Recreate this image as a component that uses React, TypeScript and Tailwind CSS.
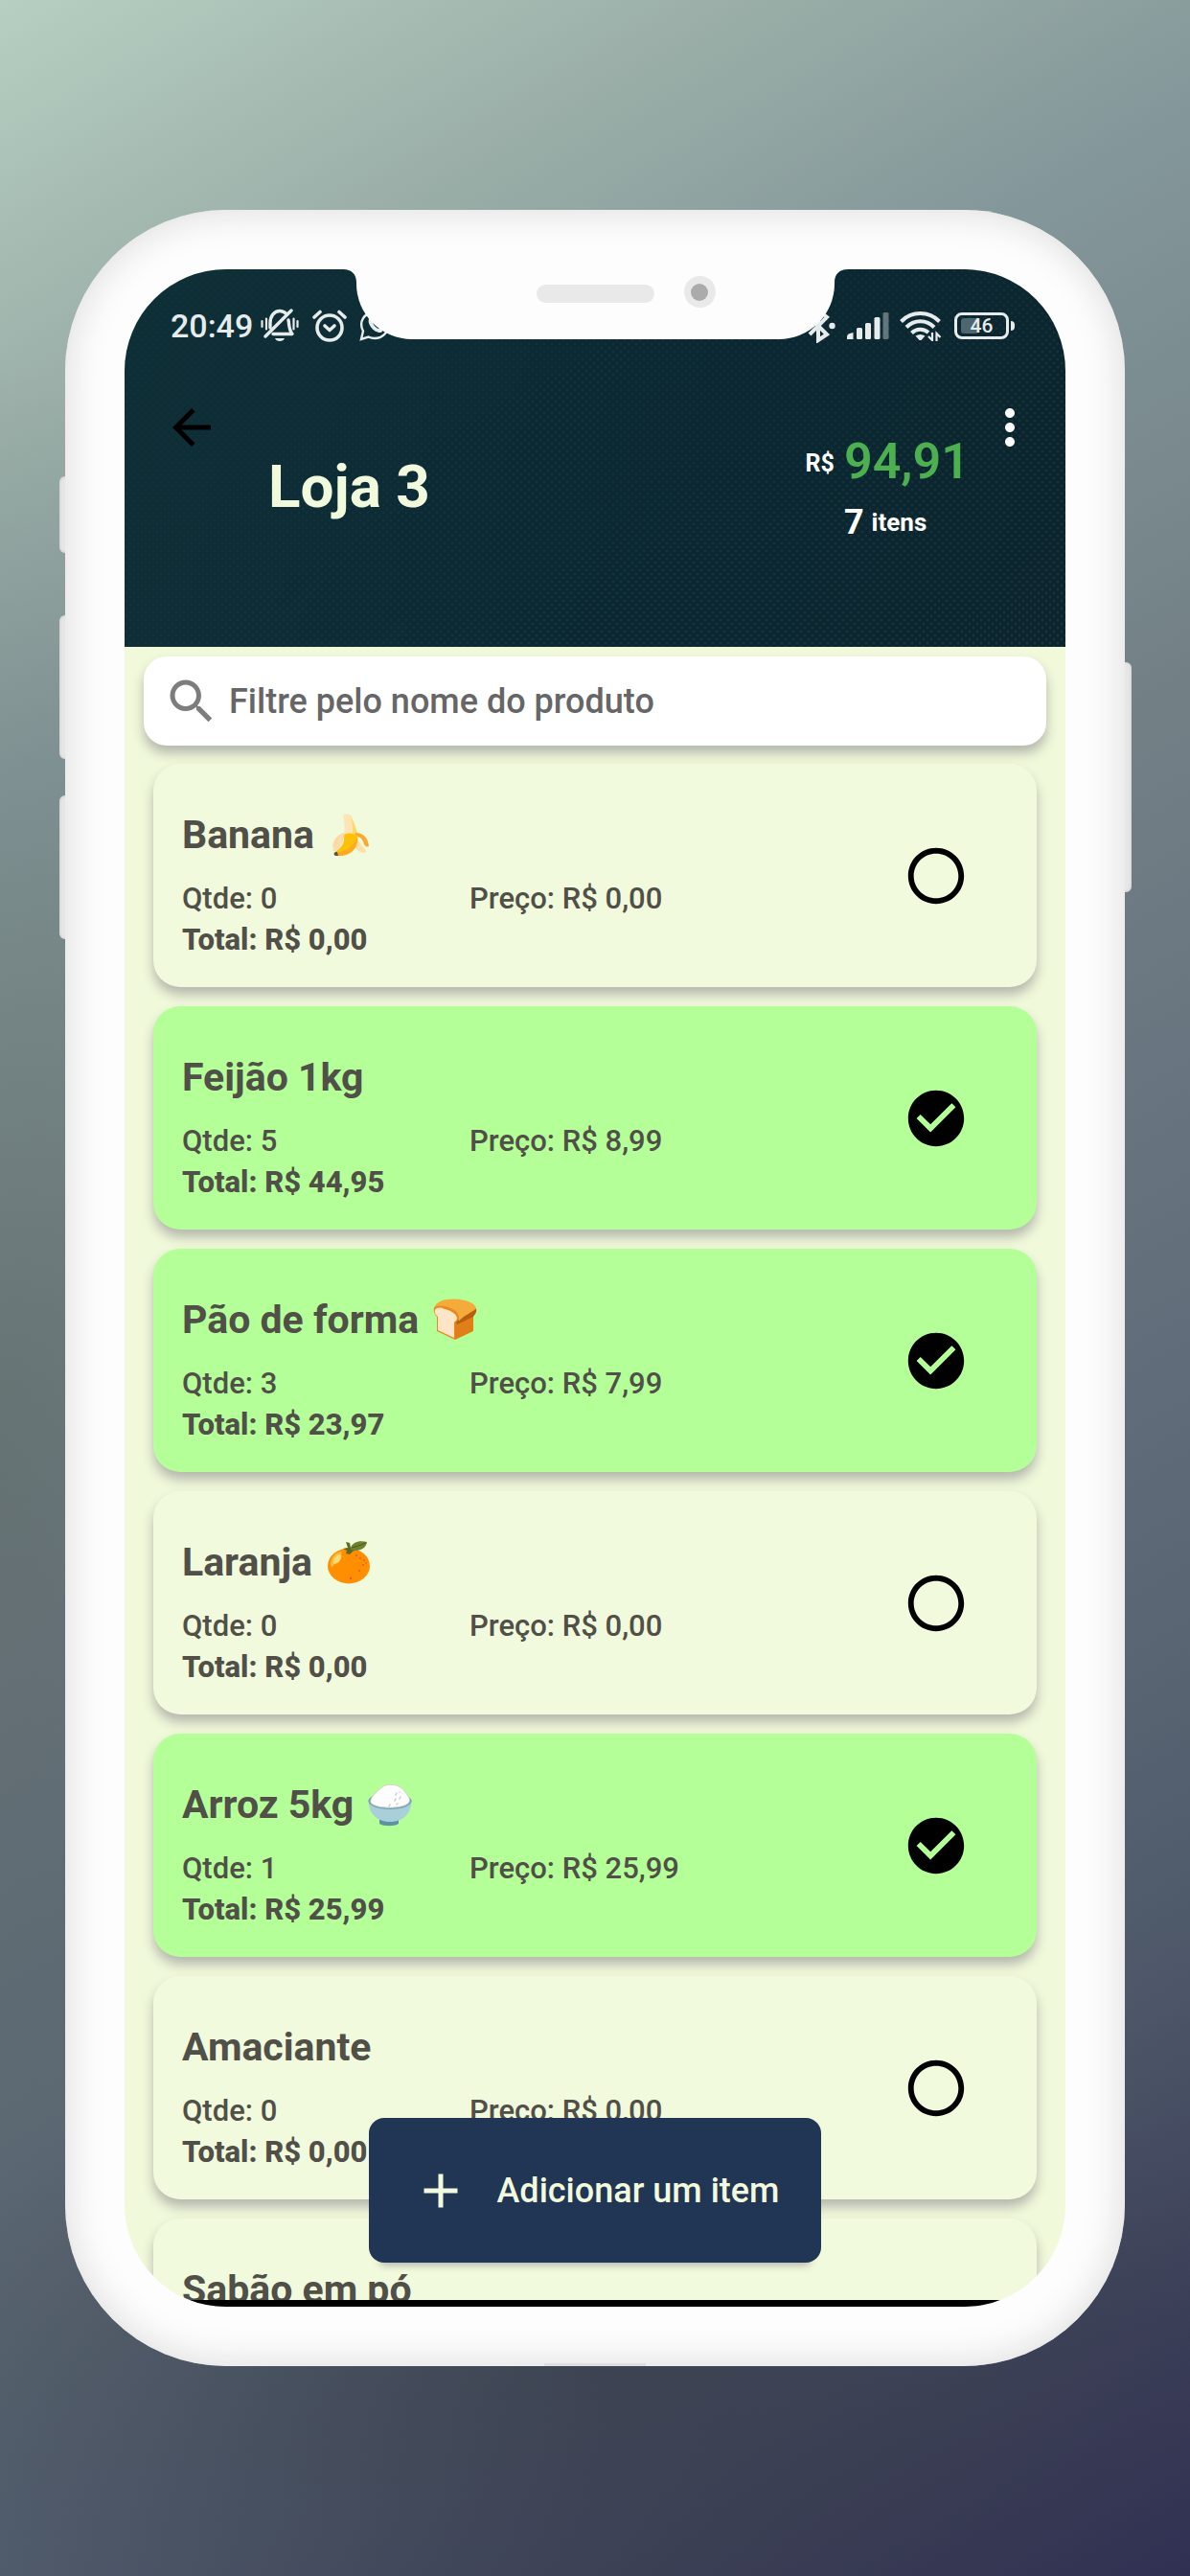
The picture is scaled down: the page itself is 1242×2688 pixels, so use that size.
import { useState } from "react";
import type { ReactNode } from "react";

type Product = {
  name: string;
  qty: string;
  price: string;
  total: string;
  done: boolean;
  emoji?: ReactNode;
};

function Banana() {
  return (
    <svg viewBox="0 0 48 48" className="size-12" role="img" aria-label="banana">
      <path d="M24 21C14 21 6 26 5 37c3 3 7-1 9-6 3-5 9-8 14-7z" fill="#fbd9a5" />
      <path d="M16 4c2-2 7-2 9 1 2 6 5 13 6 19l-6 6-8-5c1-7 1-15-1-21z" fill="#fde4b5" />
      <path d="M24 4c3 7 7 14 7 22l-6 3c2-9 1-17-1-25z" fill="#fdd968" />
      <path d="M29 22c7 0 13 4 14 14-2 1-4 0-5-2-1-5-4-8-9-9z" fill="#fba82c" />
      <path d="M28 25c4 2 5 9 12 15l-1 3c-8 0-13-7-12-16z" fill="#fde0a5" />
      <path d="M17 24c4-2 10-2 14 1 2 12-6 22-21 21-3-1-3-3-1-5 6-4 9-9 8-17z" fill="#ffc107" />
      <path d="M31 27c0 11-7 19-21 19-2-1-2-2-1-3 12-2 19-9 22-16z" fill="#ffa726" />
      <path d="M18 23c-2 2-1 7-4 12-3 5-7 8-9 5 3-2 5-6 6-10 1-3 3-6 7-7z" fill="#fcdda9" />
      <path d="M8 42c-2 1-2 3 0 4l3 0-1-4z" fill="#5d5140" />
    </svg>
  );
}

function Bread() {
  return (
    <svg viewBox="0 0 48 48" className="size-12" role="img" aria-label="pão">
      <path d="M24 45V24l21-10-2 6v16z" fill="#e07f18" />
      <path d="M24 23l22-11c1 5-2 7-3 9l-17 8z" fill="#b85c10" />
      <path d="M2 12C4 5 13 2 24 2.500s21 4 22 10c-6 5-13 7-18 13-1-6-7-11-16-13-5-1-9-1-10-.5z" fill="#f5ab3a" />
      <path d="M2 12c1-3 6-3 11-2 9 2 15 6 15 12 0 3-2 4-4 5v18L5 36V21c-2-2-4-5-3-9z" fill="#e88a20" />
      <path d="M3 14c2-3 6-3 10-1 8 2 13 6 13 10 0 2-3 3-3 4v16L6 35V21c-2-2-4-4-3-7z" fill="#ffe5c8" />
    </svg>
  );
}

function Orange() {
  return (
    <svg viewBox="0 0 48 48" className="size-12" role="img" aria-label="laranja">
      <ellipse cx="24" cy="28" rx="22" ry="18.500" fill="#ff8f00" />
      <path d="M5 27c0-8 5-13 11-14 2 2-1 5-4 8-2 3-3 7-6 8z" fill="#ffb83d" />
      <ellipse cx="12" cy="21" rx="3" ry="6" transform="rotate(40 12 21)" fill="#ffdb70" />
      <path d="M21 3l4 1 1 5 6 2-4 2-3 3-4-1 1-3-4-2 5-1z" fill="#5b6b22" />
      <path d="M26 9c2-6 9-8 17-6-1 7-9 11-17 8z" fill="#6f8130" />
      <path d="M27 9c5-1 9-3 15-5" stroke="#4c5c1c" strokeWidth="1" fill="none" />
      <g fill="#f4511e">
        <circle cx="36" cy="20" r="1" />
        <circle cx="40" cy="22" r="1" />
        <circle cx="39" cy="27" r="1" />
        <circle cx="35" cy="33" r="1" />
        <circle cx="32" cy="17" r="1" />
        <circle cx="26" cy="41" r="1.200" />
        <circle cx="42" cy="25" r=".8" />
      </g>
    </svg>
  );
}

function Rice() {
  return (
    <svg viewBox="0 0 48 48" className="size-12" role="img" aria-label="arroz">
      <path d="M13 39h20v5c-4 3-16 3-20 0z" fill="#5d93a5" />
      <ellipse cx="24" cy="20" rx="22.500" ry="8" fill="#6fa3b5" />
      <path d="M1.500 20h45c0 12-8 22-22.500 22S1.500 32 1.500 20z" fill="#a9d0da" />
      <path d="M1.500 20c0 5 9 9 22.500 9s22.500-4 22.500-9l-2-3H4z" fill="#6fa3b5" />
      <path d="M4 22c-1-5 4-9 8-13C17 4 21 3 25 3.500c8-.5 13 4 16 9 3 4 4 6 3 9-4 7-34 8-40 .5z" fill="#fdfdfd" stroke="#d8d2c8" strokeWidth="1" />
      <g stroke="#cfcdd0" strokeWidth="1.600" strokeLinecap="round">
        <path d="M31 12l-1 2M35 16l-1 2M30 18l-1 2M24 24l-1 2M31 24l1-1M34 11h0" />
      </g>
    </svg>
  );
}

const products: Product[] = [
  { name: "Banana", qty: "0", price: "0,00", total: "0,00", done: false, emoji: <Banana /> },
  { name: "Feijão 1kg", qty: "5", price: "8,99", total: "44,95", done: true },
  { name: "Pão de forma", qty: "3", price: "7,99", total: "23,97", done: true, emoji: <Bread /> },
  { name: "Laranja", qty: "0", price: "0,00", total: "0,00", done: false, emoji: <Orange /> },
  { name: "Arroz 5kg", qty: "1", price: "25,99", total: "25,99", done: true, emoji: <Rice /> },
  { name: "Amaciante", qty: "0", price: "0,00", total: "0,00", done: false },
  { name: "Sabão em pó", qty: "0", price: "0,00", total: "0,00", done: false },
];

function ProductCard({ product }: { product: Product }) {
  const [done, setDone] = useState(product.done);
  return (
    <li
      className={`flex shrink-0 items-center justify-between rounded-[28px] pr-[70px] pl-[30px] shadow-[0_8px_12px_rgba(60,50,80,0.32)] ${
        done ? "bg-[#b5ff99]" : "bg-[#f1fadc]"
      }`}
    >
      <div className="pt-[50px] pb-[28px] text-[#504f48]">
        <h2 className="flex items-center gap-[14px] text-[41px] leading-[48px] font-bold">
          {product.name}
          {product.emoji}
        </h2>
        <div className="mt-[21px] grid grid-cols-[300px_auto] text-[31px] leading-[43px] font-medium">
          <span>Qtde: {product.qty}</span>
          <span>Preço: R$ {product.price}</span>
          <strong className="font-extrabold">Total: R$ {product.total}</strong>
        </div>
      </div>
      <label className="size-[70px] cursor-pointer">
        <input
          type="checkbox"
          className="sr-only"
          checked={done}
          onChange={(e) => setDone(e.target.checked)}
          aria-label={product.name}
        />
        <svg viewBox="0 0 24 24" className="size-full fill-black">
          {done ? (
            <path d="M12 2C6.480 2 2 6.480 2 12s4.480 10 10 10 10-4.480 10-10S17.520 2 12 2zm-2 15l-5-5 1.410-1.410L10 14.170l7.590-7.590L19 8l-9 9z" />
          ) : (
            <path d="M12 2C6.480 2 2 6.480 2 12s4.480 10 10 10 10-4.480 10-10S17.520 2 12 2zm0 18c-4.420 0-8-3.580-8-8s3.580-8 8-8 8 3.580 8 8-3.580 8-8 8z" />
          )}
        </svg>
      </label>
    </li>
  );
}

function StatusBar() {
  return (
    <div className="flex h-[117px] items-center justify-between pr-[53px] pl-12 text-[#e6ebec]">
      <div className="flex items-center">
        <span className="text-[34px] leading-10 font-medium">20:49</span>
        <svg viewBox="0 0 40 36" className="ml-2 h-9 w-10" fill="none" stroke="currentColor" strokeWidth="3.400" strokeLinecap="round">
          <path d="M10 20v-5c0-7 4-12.500 10-12.500 3 0 5 1 7 3" />
          <path d="M29 12c1 4 0 9 4 14.500H13" strokeLinejoin="round" />
          <path d="M32 2L5 29" />
          <path d="M1.500 13v6M6 10.500v11M34.500 10.500v11M38.500 13v6" strokeWidth="2.200" />
          <path d="M15 31h10c-1 4-9 4-10 0z" fill="currentColor" stroke="none" />
        </svg>
        <svg viewBox="0 0 36 34" className="ml-[14px] h-[34px] w-9" fill="none" stroke="currentColor" strokeWidth="3.600" strokeLinecap="round">
          <circle cx="18" cy="19" r="13" />
          <path d="M13 17l5 4.500 5-4.500" strokeLinejoin="round" />
          <path d="M2 8l6-5.500M34 8l-6-5.500" strokeWidth="3.600" />
        </svg>
        <svg viewBox="0 0 32 32" className="ml-[13px] size-8" fill="none" stroke="currentColor" strokeWidth="2.400">
          <path d="M2 30l2-8.500C-1 12 5 2 16 2c8 0 14 6 14 13.500S24 29 16 29c-2.500 0-4.500-.5-6.500-1.500z" />
          <path d="M10 9c-2 4 4 14 12 14 3 0 3-4 1-5l-3 1c-3-1-6-5-6-7l1-3c-2-2-4-2-5 0z" fill="currentColor" stroke="none" />
        </svg>
      </div>
      <div className="flex items-center">
        <svg viewBox="0 0 30 36" className="h-9 w-[30px]" fill="none" stroke="currentColor" strokeWidth="4">
          <path d="M3 9l18 18-9 6V2l9 7L3 27" />
          <circle cx="26.500" cy="18" r="3.200" fill="currentColor" stroke="none" />
        </svg>
        <svg viewBox="0 0 44 28" className="ml-3 h-7 w-11" fill="currentColor">
          <path d="M0 28v-3q0-3 6.500-4v7z" />
          <rect x="10" y="16" width="6" height="12" rx="1.500" />
          <rect x="19" y="11" width="6" height="17" rx="1.500" />
          <rect x="28.500" y="5" width="6" height="23" rx="1.500" />
          <rect x="37.500" y="0" width="6" height="28" rx="1.500" opacity="0.400" />
        </svg>
        <svg viewBox="0 0 44 32" className="ml-[11px] h-8 w-11" fill="none" stroke="currentColor" strokeWidth="4">
          <path d="M1.500 11.500a28 28 0 0 1 40 0" />
          <path d="M7 17.500a20 20 0 0 1 29 0" />
          <path d="M12.500 23.500a12.500 12.500 0 0 1 17.500-.5" />
          <path d="M16.500 26.500q5-3 10 0l-4 4.500h-2z" fill="currentColor" stroke="none" />
          <path d="M34 23v8l-4-4M38.500 32v-8l4 4" strokeWidth="2.200" />
        </svg>
        <div className="ml-[13px] flex items-center gap-[2px]">
          <div className="relative flex h-7 w-[57px] items-center justify-center rounded-lg border-[3px] border-current">
            <span className="absolute top-[3px] bottom-[3px] left-1 w-[18px] rounded-[3px] bg-[#4d6670]" />
            <span className="relative text-[21px] leading-5 font-medium">46</span>
          </div>
          <span className="h-[10px] w-1 rounded-r-sm bg-current" />
        </div>
      </div>
    </div>
  );
}

function Header() {
  return (
    <header className="relative shrink-0 bg-[linear-gradient(115deg,#0f2f37,#0b2832_60%,#0b242d)] pb-[109px]">
      <div className="absolute inset-0 bg-[radial-gradient(circle_at_25%_25%,rgba(150,190,180,0.16)_0,transparent_2px),radial-gradient(circle_at_75%_75%,rgba(150,190,180,0.16)_0,transparent_2px)] bg-[size:8px_8px] [mask-image:linear-gradient(150deg,rgba(0,0,0,0.25)_20%,black)]" />
      <div className="relative">
        <StatusBar />
        <div className="flex items-start pt-[18px] pr-7 pl-10">
          <button type="button" aria-label="Voltar" className="size-[60px]">
            <svg viewBox="0 0 24 24" className="size-full fill-black">
              <path d="M20 11H7.830l5.590-5.590L12 4l-8 8 8 8 1.410-1.410L7.830 13H20v-2z" />
            </svg>
          </button>
          <h1 className="mt-14 ml-[50px] flex-1 text-[62px] leading-[72px] font-bold text-[#f1fadc]">Loja 3</h1>
          <div className="mt-9 grid grid-cols-[auto_auto] items-center gap-x-[10px] gap-y-3 font-bold text-white">
            <span className="pt-1 text-[25px] leading-[30px]">R$</span>
            <span className="text-[52px] leading-[60px] font-semibold text-[#4caf50]">94,91</span>
            <p className="col-start-2 flex items-center gap-2 text-[26px] leading-[42px]">
              <span className="text-[36px]">7</span> itens
            </p>
          </div>
          <button type="button" aria-label="Mais opções" className="ml-3 size-[60px]">
            <svg viewBox="0 0 24 24" className="size-full fill-white">
              <path d="M12 8c1.100 0 2-.9 2-2s-.9-2-2-2-2 .9-2 2 .9 2 2 2zm0 2c-1.100 0-2 .9-2 2s.9 2 2 2 2-.9 2-2-.9-2-2-2zm0 6c-1.100 0-2 .9-2 2s.9 2 2 2 2-.9 2-2-.9-2-2-2z" />
            </svg>
          </button>
        </div>
      </div>
    </header>
  );
}

function Notch() {
  return (
    <div className="absolute inset-x-0 top-0 flex items-start justify-center text-[#fdfdfd]">
      <svg viewBox="0 0 14 14" className="size-[14px] fill-current">
        <path d="M0 0H14V14C14 5 9 0 0 0z" />
      </svg>
      <div className="relative flex h-[73px] w-[499px] justify-center rounded-b-[58px] bg-current pt-4">
        <span className="h-[19px] w-[123px] rounded-full bg-[#e9e9e9]" />
        <span className="absolute top-[7px] right-[124px] flex size-[33px] items-center justify-center rounded-full bg-[#e9e9e9]">
          <span className="size-[18px] rounded-full bg-[#ababab]" />
        </span>
      </div>
      <svg viewBox="0 0 14 14" className="size-[14px] fill-current">
        <path d="M14 0H0V14C0 5 5 0 14 0z" />
      </svg>
    </div>
  );
}

const sideKey = "absolute w-[10px] bg-[#e6e6e6] shadow-[inset_0_0_3px_#bdbdbd]";

export default function App() {
  return (
    <main className="flex h-screen bg-[radial-gradient(ellipse_24%_42%_at_0%_56%,rgba(75,85,70,0.28),transparent),radial-gradient(ellipse_60%_14%_at_50%_92%,rgba(48,52,62,0.5),transparent),linear-gradient(150deg,#b6cfc2_0%,#9bafa8_13%,#84979a_24%,#728086_42%,#66727e_56%,#586472_72%,#4c5668_82%,#3c3f59_92%,#303053_100%)] px-[68px] py-[219px] font-['Roboto',sans-serif]">
      <div className="relative flex flex-1">
        <span className={`${sideKey} top-[278px] -left-[6px] h-20 rounded-l-md`} />
        <span className={`${sideKey} top-[423px] -left-[6px] h-[150px] rounded-l-md`} />
        <span className={`${sideKey} top-[611px] -left-[6px] h-[150px] rounded-l-md`} />
        <span className={`${sideKey} top-[472px] -right-[7px] h-60 rounded-r-md`} />
        <div className="relative flex flex-1 rounded-[168px] bg-[#fdfdfd] p-[62px] shadow-[inset_0_0_40px_#d9d9d9]">
          <div className="relative flex flex-1 flex-col overflow-hidden rounded-[106px] bg-[#f0f9da]">
            <Header />
            <label className="mx-5 mt-[10px] flex h-[93px] shrink-0 items-center rounded-3xl bg-white pl-5 shadow-[0_8px_12px_rgba(60,50,80,0.32)]">
              <svg viewBox="0 0 24 24" className="size-[60px] fill-[#7d7d7d]">
                <path d="M15.500 14h-.79l-.28-.27C15.410 12.590 16 11.110 16 9.500 16 5.910 13.090 3 9.500 3S3 5.910 3 9.500 5.910 16 9.500 16c1.610 0 3.090-.59 4.230-1.570l.27.28v.79l5 4.990L20.490 19l-4.990-5zm-6 0C7.010 14 5 11.990 5 9.500S7.010 5 9.500 5 14 7.010 14 9.500 11.990 14 9.500 14z" />
              </svg>
              <input
                type="text"
                aria-label="Filtre pelo nome do produto"
                placeholder="Filtre pelo nome do produto"
                className="ml-[9px] min-w-0 flex-1 bg-transparent text-[36px] leading-[42px] font-medium outline-none placeholder:text-[#666666]"
              />
            </label>
            <ul className="mt-[19px] flex min-h-0 flex-1 flex-col gap-5 px-[30px]">
              {products.map((p) => (
                <ProductCard key={p.name} product={p} />
              ))}
            </ul>
            <div className="absolute inset-x-0 bottom-0 h-[7px] bg-black" />
            <div className="absolute inset-x-0 bottom-[46px] flex justify-center">
              <button
                type="button"
                className="flex h-[151px] items-center rounded-2xl bg-[#213554] pr-[44px] pl-[45px] text-[36px] leading-[42px] font-medium text-[#f1fadc] shadow-[0_14px_8px_-12px_rgba(60,50,80,0.4)]"
              >
                <svg viewBox="0 0 24 24" className="mr-[29px] size-[60px] fill-current">
                  <path d="M19 13h-6v6h-2v-6H5v-2h6V5h2v6h6v2z" />
                </svg>
                Adicionar um item
              </button>
            </div>
            <Notch />
          </div>
          <span className="absolute bottom-0 left-1/2 h-[3px] w-[106px] -translate-x-1/2 bg-[#dedede]" />
        </div>
      </div>
    </main>
  );
}
